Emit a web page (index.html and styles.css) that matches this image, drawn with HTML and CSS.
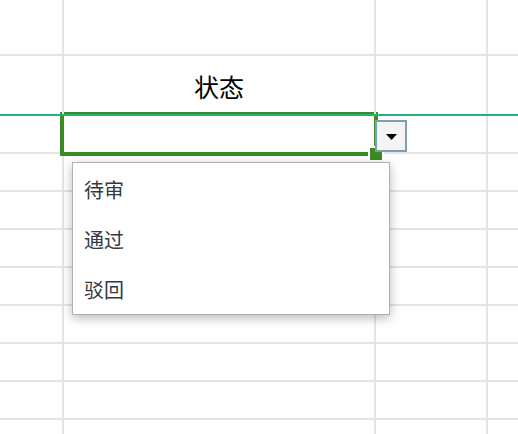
FILE: index.html
```html
<!DOCTYPE html>
<html lang="zh">
<head>
<meta charset="utf-8">
<title>Sheet</title>
<link rel="stylesheet" href="styles.css">
</head>
<body>
<div class="sheet">
  <div class="row row-top"><div class="cell"></div><div class="cell"></div><div class="cell"></div><div class="cell"></div></div>
  <div class="row row-head"><div class="cell"></div><div class="cell head">状态</div><div class="cell"></div><div class="cell"></div></div>
  <div class="row"><div class="cell"></div><div class="cell"></div><div class="cell"></div><div class="cell"></div></div>
  <div class="row"><div class="cell"></div><div class="cell"></div><div class="cell"></div><div class="cell"></div></div>
  <div class="row"><div class="cell"></div><div class="cell"></div><div class="cell"></div><div class="cell"></div></div>
  <div class="row"><div class="cell"></div><div class="cell"></div><div class="cell"></div><div class="cell"></div></div>
  <div class="row"><div class="cell"></div><div class="cell"></div><div class="cell"></div><div class="cell"></div></div>
  <div class="row"><div class="cell"></div><div class="cell"></div><div class="cell"></div><div class="cell"></div></div>
  <div class="row"><div class="cell"></div><div class="cell"></div><div class="cell"></div><div class="cell"></div></div>
  <div class="row"><div class="cell"></div><div class="cell"></div><div class="cell"></div><div class="cell"></div></div>
  <div class="row"><div class="cell"></div><div class="cell"></div><div class="cell"></div><div class="cell"></div></div>

  <div class="selection"></div>
  <div class="handle"></div>
  <div class="drop-btn">
    <svg width="11" height="6" viewBox="0 0 11 6"><polygon points="0,0 11,0 5.5,6" fill="#000"/></svg>
  </div>
  <div class="menu">
    <div class="item">待审</div>
    <div class="item">通过</div>
    <div class="item">驳回</div>
  </div>
</div>
</body>
</html>
```

FILE: styles.css
```css
html, body {
  margin: 0;
  padding: 0;
  background: #fff;
  overflow: hidden;
}
.sheet {
  position: relative;
  width: 518px;
  height: 434px;
  overflow: hidden;
  font-family: "Noto Sans CJK SC", "Noto Sans", sans-serif;
}
.row {
  display: grid;
  grid-template-columns: 64px 312px 112px 1fr;
  height: 38px;
  box-sizing: border-box;
  border-bottom: 2px solid #e4e4e4;
}
.row-top {
  height: 56px;
}
.row-head {
  position: relative;
  z-index: 2;
  height: 60px;
  border-bottom-color: #22b27f;
}
.cell {
  box-sizing: border-box;
  border-right: 2px solid #e4e4e4;
}
.cell:last-child {
  border-right: none;
}
.head {
  display: flex;
  align-items: center;
  justify-content: center;
  padding-top: 3px;
  font-size: 25px;
  color: #000;
  line-height: 1;
}
.selection {
  position: absolute;
  left: 60px;
  top: 112px;
  width: 318px;
  height: 44px;
  box-sizing: border-box;
  border: 4px solid #3b8a22;
}
.handle {
  position: absolute;
  left: 370px;
  top: 148px;
  width: 12px;
  height: 12px;
  background: #3b8a22;
  box-shadow: 0 0 0 2px #fff;
}
.drop-btn {
  position: absolute;
  left: 375px;
  top: 120px;
  width: 32px;
  height: 32px;
  box-sizing: border-box;
  border: 2px solid #7f9cb9;
  background: #f4f4f4;
  display: flex;
  align-items: center;
  justify-content: center;
}
.drop-btn svg {
  display: block;
  margin-top: 2px;
}
.menu {
  position: absolute;
  left: 72px;
  top: 162px;
  width: 318px;
  height: 153px;
  box-sizing: border-box;
  border: 1px solid #b0b0b0;
  background: #fff;
  box-shadow: 0 3px 10px rgba(0, 0, 0, 0.28);
  padding-top: 1px;
}
.item {
  height: 50px;
  display: flex;
  align-items: center;
  padding-left: 11px;
  font-size: 20px;
  color: #333842;
}
```
